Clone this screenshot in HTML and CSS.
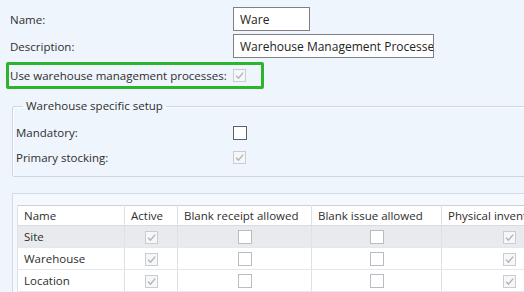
FILE: index.html
```html
<!DOCTYPE html>
<html>
<head>
<meta charset="utf-8">
<link rel="stylesheet" href="styles.css">
</head>
<body>
<div class="page">
  <div class="field-row first">
    <span class="label">Name:</span>
    <span class="input short">Ware</span>
  </div>
  <div class="field-row">
    <span class="label">Description:</span>
    <span class="input long">Warehouse Management Processe</span>
  </div>
  <div class="highlight">
    <span class="label hl-label">Use warehouse management processes:</span>
    <span class="cb checked"><svg viewBox="0 0 13 13" width="13" height="13"><path d="M3 6.6 L5.4 9.2 L10.2 3.6" fill="none" stroke="#b3b3b3" stroke-width="1.4"/></svg></span>
  </div>

  <fieldset class="group">
    <legend>Warehouse specific setup</legend>
    <div class="group-row">
      <span class="label g-label">Mandatory:</span>
      <span class="cb enabled"></span>
    </div>
    <div class="group-row">
      <span class="label g-label">Primary stocking:</span>
      <span class="cb checked"><svg viewBox="0 0 13 13" width="13" height="13"><path d="M3 6.6 L5.4 9.2 L10.2 3.6" fill="none" stroke="#b3b3b3" stroke-width="1.4"/></svg></span>
    </div>
  </fieldset>

  <div class="grid-panel">
    <table class="grid">
      <colgroup>
        <col class="c-name"><col class="c-active"><col class="c-receipt"><col class="c-issue"><col class="c-phys">
      </colgroup>
      <thead>
        <tr><th>Name</th><th>Active</th><th>Blank receipt allowed</th><th>Blank issue allowed</th><th>Physical inventory</th></tr>
      </thead>
      <tbody>
        <tr class="sel">
          <td>Site</td>
          <td class="mid"><span class="cb checked"><svg viewBox="0 0 13 13" width="13" height="13"><path d="M3 6.6 L5.4 9.2 L10.2 3.6" fill="none" stroke="#b3b3b3" stroke-width="1.4"/></svg></span></td>
          <td class="mid"><span class="cb off"></span></td>
          <td class="mid"><span class="cb off"></span></td>
          <td class="mid"><span class="cb checked"><svg viewBox="0 0 13 13" width="13" height="13"><path d="M3 6.6 L5.4 9.2 L10.2 3.6" fill="none" stroke="#b3b3b3" stroke-width="1.4"/></svg></span></td>
        </tr>
        <tr>
          <td>Warehouse</td>
          <td class="mid"><span class="cb checked"><svg viewBox="0 0 13 13" width="13" height="13"><path d="M3 6.6 L5.4 9.2 L10.2 3.6" fill="none" stroke="#b3b3b3" stroke-width="1.4"/></svg></span></td>
          <td class="mid"><span class="cb off"></span></td>
          <td class="mid"><span class="cb off"></span></td>
          <td class="mid"><span class="cb checked"><svg viewBox="0 0 13 13" width="13" height="13"><path d="M3 6.6 L5.4 9.2 L10.2 3.6" fill="none" stroke="#b3b3b3" stroke-width="1.4"/></svg></span></td>
        </tr>
        <tr>
          <td>Location</td>
          <td class="mid"><span class="cb checked"><svg viewBox="0 0 13 13" width="13" height="13"><path d="M3 6.6 L5.4 9.2 L10.2 3.6" fill="none" stroke="#b3b3b3" stroke-width="1.4"/></svg></span></td>
          <td class="mid"><span class="cb off"></span></td>
          <td class="mid"><span class="cb off"></span></td>
          <td class="mid"><span class="cb checked"><svg viewBox="0 0 13 13" width="13" height="13"><path d="M3 6.6 L5.4 9.2 L10.2 3.6" fill="none" stroke="#b3b3b3" stroke-width="1.4"/></svg></span></td>
        </tr>
      </tbody>
    </table>
  </div>
</div>
</body>
</html>
```

FILE: styles.css
```css
html, body {
  margin: 0;
  padding: 0;
  background: #eff5fc;
  overflow: hidden;
}
body {
  width: 524px;
  height: 292px;
  font-family: "Open Sans", "Noto Sans", sans-serif;
  font-size: 11.5px;
  color: #2e2e2e;
}
.page {
  padding-top: 7px;
}
.field-row {
  display: flex;
  align-items: center;
  height: 24px;
  margin-bottom: 3px;
  padding-left: 10px;
}
.label {
  display: block;
  width: 223px;
  white-space: nowrap;
}
.input {
  box-sizing: border-box;
  height: 24px;
  display: flex;
  align-items: center;
  padding-left: 6px;
  background: #fff;
  border: 1px solid #7d8187;
  font-size: 12px;
  color: #222;
  white-space: nowrap;
  overflow: hidden;
}
.input.short { width: 77px; }
.input.long { width: 201px; }

.highlight {
  box-sizing: border-box;
  width: 258px;
  height: 27px;
  margin: 4px 0 0 6px;
  border: 3px solid #2cb52c;
  border-radius: 2px;
  display: flex;
  align-items: center;
  padding-left: 1px;
}
.hl-label { width: 223px; }

.cb {
  box-sizing: border-box;
  display: inline-block;
  width: 13px;
  height: 13px;
  background: #fff;
  vertical-align: middle;
}
.cb svg { display: block; margin: -1px; }
.cb.checked {
  border: 1px solid #c9ccd0;
  background: #f6f7f8;
}
.cb.enabled {
  width: 14px;
  height: 14px;
  border: 1px solid #5d6065;
}
.cb.off {
  width: 14px;
  height: 14px;
  border: 1px solid #b9bcc0;
}

.group {
  margin: 9px 0 0 12px;
  padding: 6px 0 6px 3px;
  width: 560px;
  border: 1px solid #cfd6de;
  box-shadow: inset 1px 1px 0 #fbfdff;
  border-radius: 2px;
}
.group legend {
  padding: 0 3px;
  margin-left: 7px;
  line-height: 16px;
  color: #2e2e2e;
}
.group-row {
  display: flex;
  align-items: center;
  height: 25px;
}
.g-label { width: 217px; }

.grid-panel {
  margin: 16px 0 0 12px;
  width: 560px;
  border: 1px solid #d3dbe4;
  background: #f5f9fd;
  padding: 11px 0 0 4px;
}
.grid {
  border-collapse: collapse;
  table-layout: fixed;
  width: 560px;
  background: #fff;
  border: 1px solid #c9d0d8;
}
.c-name { width: 107px; }
.c-active { width: 53px; }
.c-receipt { width: 134px; }
.c-issue { width: 130px; }
.c-phys { width: 136px; }
.grid th, .grid td {
  height: 21px;
  padding: 0 0 0 6px;
  text-align: left;
  font-weight: normal;
  white-space: nowrap;
  overflow: hidden;
  border-left: 1px solid #dde2e8;
  border-bottom: 1px solid #e4e8ed;
  color: #2e2e2e;
}
.grid th {
  height: 19px;
  border-bottom: 1px solid #d6dce3;
}
.grid td.mid {
  text-align: center;
  padding: 0;
}
.grid tr.sel td {
  background: #e8eaed;
}
```
